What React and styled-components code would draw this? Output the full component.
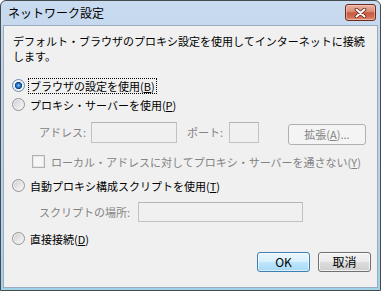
import React from 'react';
import styled, { createGlobalStyle } from 'styled-components';

const Global = createGlobalStyle`
  html, body { margin: 0; padding: 0; background: #ffffff; }
  body { font-family: "Noto Sans CJK JP", "Noto Sans", sans-serif; }
`;

const Window = styled.div`
  box-sizing: border-box;
  width: 381px;
  height: 291px;
  border: 1px solid #474a4f;
  border-radius: 6px 6px 0 0;
  background: linear-gradient(180deg, #c9dbef 0%, #bcd2ea 30%, #b4d3ea 75%, #9fd3e8 100%);
  display: flex;
  flex-direction: column;
  overflow: hidden;
`;

const TitleBar = styled.div`
  height: 24px;
  flex: none;
  display: flex;
  align-items: center;
  justify-content: space-between;
  padding: 0 4px 0 7px;
`;

const Title = styled.span`
  font-size: 12px;
  color: #000;
  line-height: 16px;
`;

const CloseButton = styled.div`
  box-sizing: border-box;
  width: 31px;
  height: 17px;
  border: 1px solid #6e2a1f;
  border-radius: 3px;
  background: linear-gradient(180deg, #eab3a3 0%, #d98a73 45%, #c75a3f 52%, #cf6d50 80%, #e0957a 100%);
  box-shadow: inset 0 0 0 1px rgba(255, 220, 210, 0.45);
  display: flex;
  align-items: center;
  justify-content: center;
  margin-top: -1px;
`;

const Client = styled.div`
  flex: 1;
  margin: 0 2px 2px 2px;
  border: 1px solid #9aabc0;
  background: #f0f0f0;
  padding: 8px 6px 0 8px;
  display: flex;
  flex-direction: column;
  font-size: 11px;
  color: #000;
`;

const Description = styled.div`
  margin-left: 1px;
  line-height: 15px;
  white-space: nowrap;
`;

const Row = styled.div`
  display: flex;
  align-items: center;
  height: ${p => p.$h || 19}px;
  margin-top: ${p => p.$mt || 0}px;
  padding-left: ${p => p.$indent || 0}px;
  white-space: nowrap;
`;

const Radio = styled.span`
  flex: none;
  box-sizing: border-box;
  width: 13px;
  height: 13px;
  border-radius: 50%;
  border: 1px solid ${p => (p.$checked ? '#6b88a8' : '#949494')};
  background: ${p =>
    p.$checked
      ? 'radial-gradient(circle at 50% 50%, #8fd0f6 0px, #3a8ad6 1.4px, #1a5ea8 2.6px, #123f7a 3.3px, #eef2f6 3.9px, #f7f7f7 100%)'
      : 'linear-gradient(135deg, #cbcbcb 0%, #e2e2e2 45%, #fafafa 100%)'};
  box-shadow: inset 0 0 0 1px ${p => (p.$checked ? '#f3f5f8' : '#eeeeee')};
`;

const OptionLabel = styled.span`
  margin-left: 4px;
  line-height: 14px;
  padding: 0 1px;
  outline: ${p => (p.$focused ? '1px dotted #000' : 'none')};
  outline-offset: 0;
  color: ${p => (p.$disabled ? '#838383' : '#000')};
`;

const FieldLabel = styled.span`
  flex: none;
  width: ${p => p.$w}px;
  margin-left: ${p => p.$ml || 0}px;
  color: #838383;
  line-height: 15px;
`;

const TextBox = styled.div`
  flex: none;
  box-sizing: border-box;
  width: ${p => p.$w}px;
  height: ${p => p.$h || 21}px;
  border: 1px solid #c2c2c2;
  border-top-color: #b5b5b5;
  background: #f0f0f0;
`;

const DisabledButton = styled.div`
  flex: none;
  box-sizing: border-box;
  width: 78px;
  height: 21px;
  margin-left: 29px;
  margin-top: 3px;
  border: 1px solid #adb2b5;
  border-radius: 3px;
  background: #f4f4f4;
  color: #838383;
  display: flex;
  align-items: center;
  justify-content: center;
  line-height: 14px;
`;

const CheckBox = styled.span`
  flex: none;
  box-sizing: border-box;
  width: 13px;
  height: 13px;
  border: 1px solid #b1b1b1;
  background: #f6f6f6;
  box-shadow: inset 0 0 0 1px #e6e6e6;
`;

const ButtonRow = styled.div`
  display: flex;
  justify-content: flex-end;
  gap: 8px;
  margin-top: 4px;
`;

const PushButton = styled.div`
  box-sizing: border-box;
  width: 53px;
  height: 20px;
  border-radius: 3px;
  border: 1px solid ${p => (p.$default ? '#3c7fb1' : '#707070')};
  background: ${p =>
    p.$default
      ? 'linear-gradient(180deg, #eaf6fd 0%, #d9f0fc 48%, #bee6fd 52%, #a7d9f5 100%)'
      : 'linear-gradient(180deg, #f2f2f2 0%, #ebebeb 48%, #dddddd 52%, #cfcfcf 100%)'};
  box-shadow: inset 0 0 0 1px ${p => (p.$default ? 'rgba(255,255,255,0.6)' : 'rgba(255,255,255,0.7)')};
  display: flex;
  align-items: center;
  justify-content: center;
  font-size: 12px;
  line-height: 14px;
  color: #000;
`;

const Key = styled.u`
  text-decoration-thickness: 1px;
  text-underline-offset: 1px;
`;

export default function App() {
  return (
    <>
      <Global />
      <Window>
        <TitleBar>
          <Title>ネットワーク設定</Title>
          <CloseButton>
            <svg width="13" height="10" viewBox="0 0 13 10">
              <path d="M2.5 1.5 L10.5 8.5 M10.5 1.5 L2.5 8.5" stroke="#5b1d14" strokeWidth="3.6" strokeLinecap="round" fill="none" />
              <path d="M2.5 1.5 L10.5 8.5 M10.5 1.5 L2.5 8.5" stroke="#ffffff" strokeWidth="2.1" strokeLinecap="round" fill="none" />
            </svg>
          </CloseButton>
        </TitleBar>
        <Client>
          <Description>
            デフォルト・ブラウザのプロキシ設定を使用してインターネットに接続
            <br />
            します。
          </Description>

          <Row $mt={12}>
            <Radio $checked />
            <OptionLabel $focused>ブラウザの設定を使用(<Key>B</Key>)</OptionLabel>
          </Row>
          <Row>
            <Radio />
            <OptionLabel>プロキシ・サーバーを使用(<Key>P</Key>)</OptionLabel>
          </Row>

          <Row $mt={7} $h={23} $indent={27}>
            <FieldLabel $w={52}>アドレス:</FieldLabel>
            <TextBox $w={86} />
            <FieldLabel $w={42} $ml={10}>ポート:</FieldLabel>
            <TextBox $w={30} />
            <DisabledButton>拡張(<Key>A</Key>)...</DisabledButton>
          </Row>

          <Row $mt={8} $indent={20}>
            <CheckBox />
            <OptionLabel $disabled style={{ marginLeft: 5 }}>
              ローカル・アドレスに対してプロキシ・サーバーを通さない(<Key>Y</Key>)
            </OptionLabel>
          </Row>

          <Row $mt={5}>
            <Radio />
            <OptionLabel>自動プロキシ構成スクリプトを使用(<Key>T</Key>)</OptionLabel>
          </Row>

          <Row $mt={6} $h={22} $indent={27}>
            <FieldLabel $w={99}>スクリプトの場所:</FieldLabel>
            <TextBox $w={165} $h={20} />
          </Row>

          <Row $mt={6}>
            <Radio />
            <OptionLabel>直接接続(<Key>D</Key>)</OptionLabel>
          </Row>

          <ButtonRow>
            <PushButton $default>OK</PushButton>
            <PushButton>取消</PushButton>
          </ButtonRow>
        </Client>
      </Window>
    </>
  );
}
